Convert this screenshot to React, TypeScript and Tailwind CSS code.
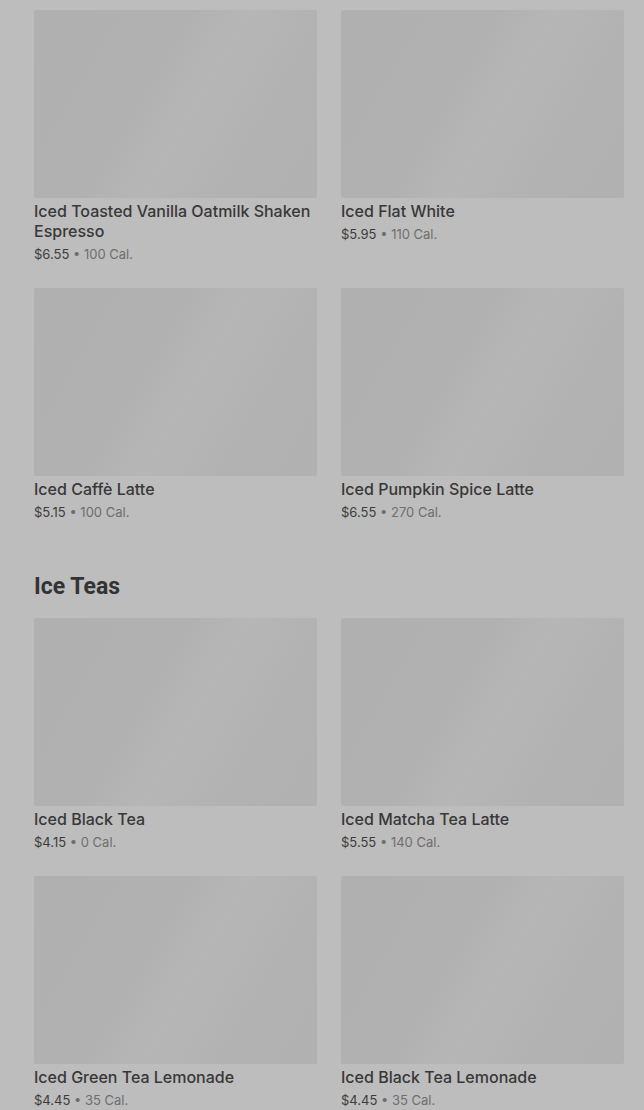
import React from 'react';

type Item = { name: string; price: string; cal: string };

const sections: { title?: string; items: Item[] }[] = [
  {
    items: [
      { name: 'Iced Toasted Vanilla Oatmilk Shaken Espresso', price: '$6.55', cal: '100 Cal.' },
      { name: 'Iced Flat White', price: '$5.95', cal: '110 Cal.' },
      { name: 'Iced Caffè Latte', price: '$5.15', cal: '100 Cal.' },
      { name: 'Iced Pumpkin Spice Latte', price: '$6.55', cal: '270 Cal.' },
    ],
  },
  {
    title: 'Ice Teas',
    items: [
      { name: 'Iced Black Tea', price: '$4.15', cal: '0 Cal.' },
      { name: 'Iced Matcha Tea Latte', price: '$5.55', cal: '140 Cal.' },
      { name: 'Iced Green Tea Lemonade', price: '$4.45', cal: '35 Cal.' },
      { name: 'Iced Black Tea Lemonade', price: '$4.45', cal: '35 Cal.' },
    ],
  },
];

function Card({ item }: { item: Item }) {
  return (
    <div>
      {/* skeleton image */}
      <div className="h-[188px] rounded-[2px] bg-[linear-gradient(120deg,#b0b0b0_0%,#b1b1b1_40%,#b6b6b6_55%,#b2b2b2_75%,#b1b1b1_100%)]" />
      <div className="mt-[3px] text-[16px] leading-5 font-medium text-[#383838] font-['Inter',sans-serif]">{item.name}</div>
      <div className="mt-1 text-[13px] leading-[18px] text-[#6e6e6e] font-['Inter',sans-serif]">
        <span className="text-[#3c3c3c]">{item.price}</span>
        <span> • </span>
        {item.cal}
      </div>
    </div>
  );
}

export default function App() {
  return (
    <div className="min-h-[1110px] bg-[#bdbdbd] pl-[34px] pr-5 pt-[10px] font-['Roboto','Liberation_Sans',sans-serif]">
      {sections.map((s, i) => (
        <div key={i}>
          {s.title && (
            <h2 className="mt-[50px] mb-[15px] text-[23px] leading-8 font-bold text-[#333333]">{s.title}</h2>
          )}
          <div className="grid grid-cols-2 gap-x-6 gap-y-[25px]">
            {s.items.map((it) => (
              <Card key={it.name} item={it} />
            ))}
          </div>
        </div>
      ))}
    </div>
  );
}
